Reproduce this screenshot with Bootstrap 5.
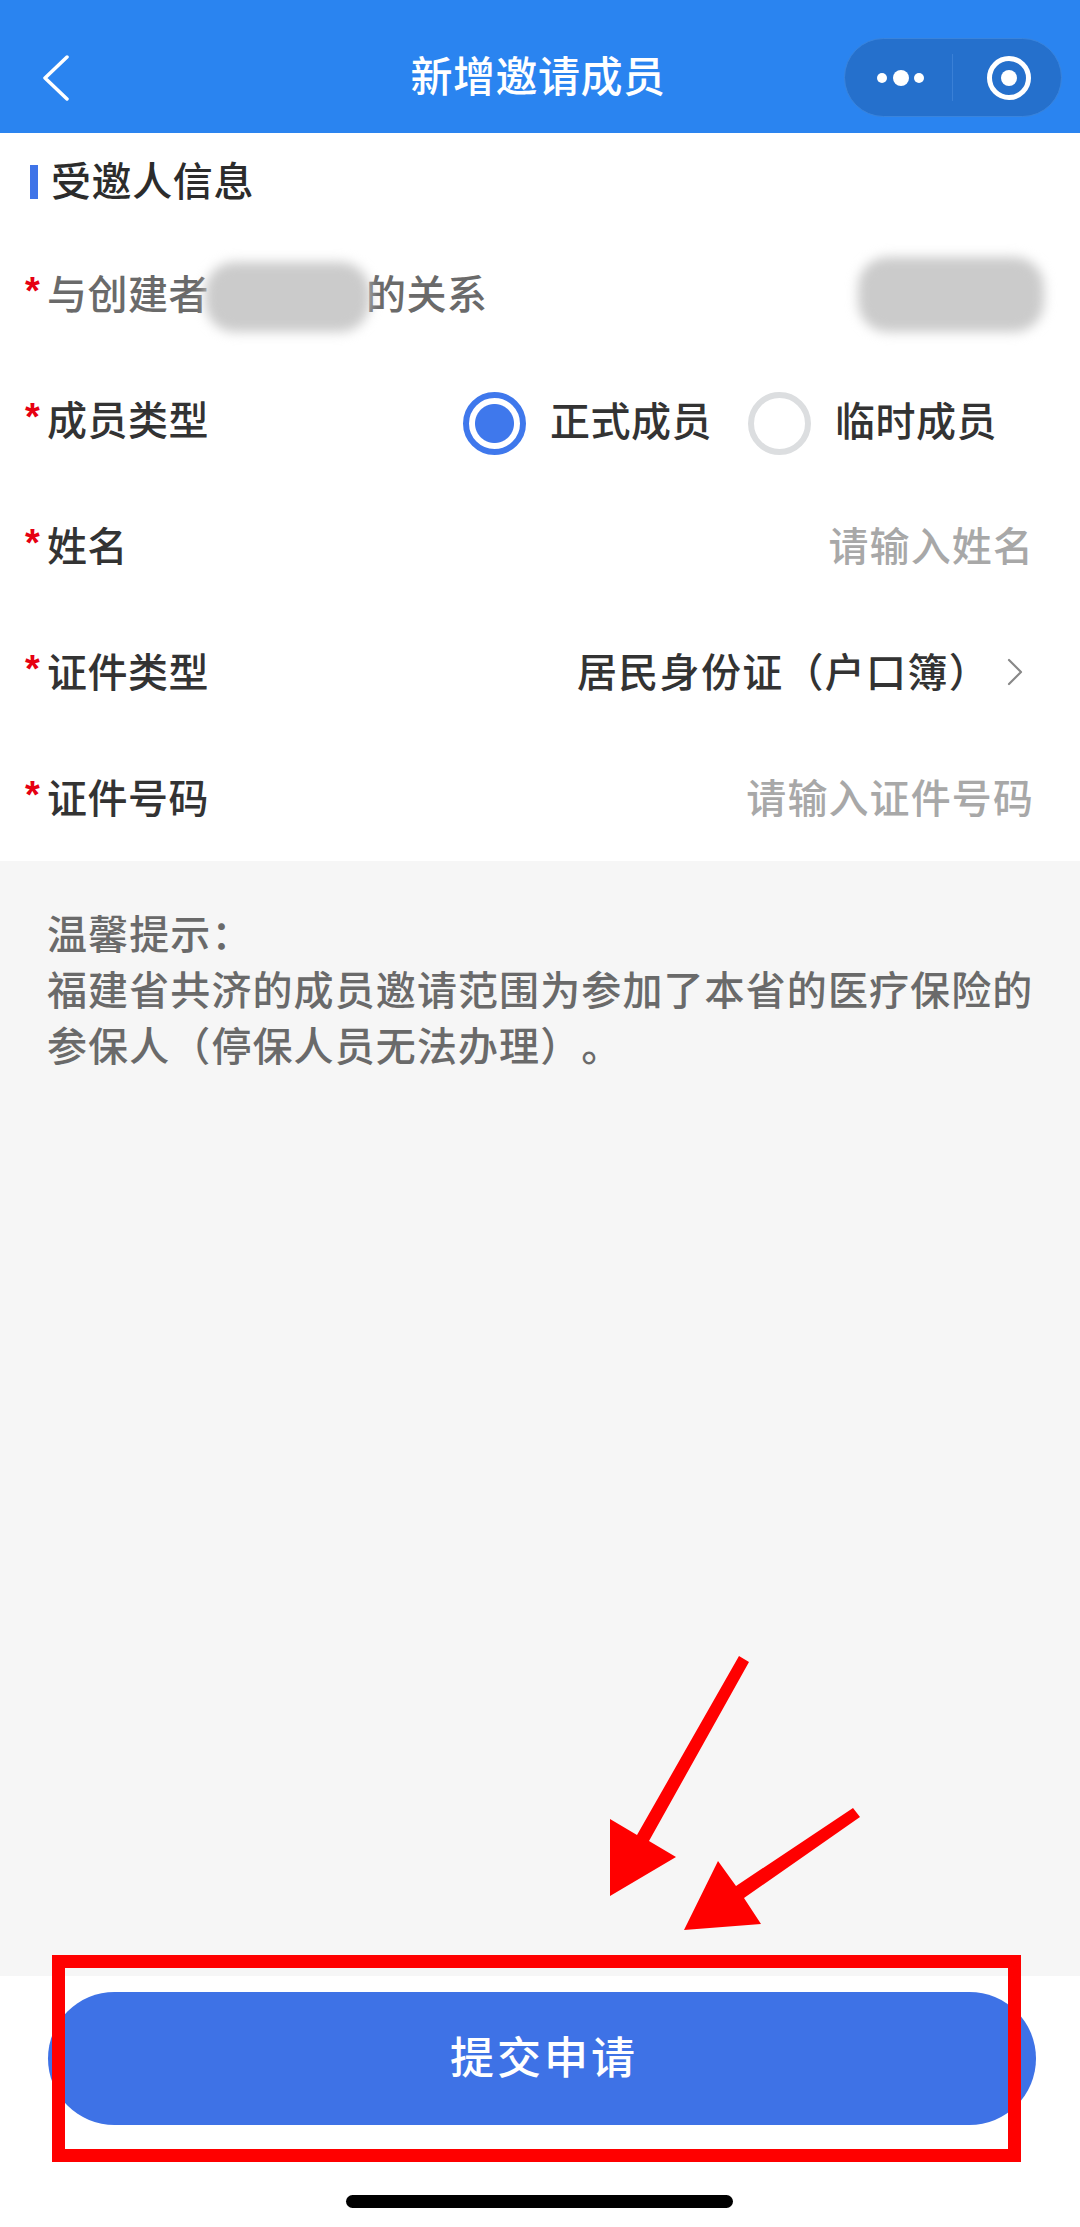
<!DOCTYPE html>
<html lang="zh-CN">
<head>
  <meta charset="UTF-8">
  <title>新增邀请成员</title>
  <link href="https://cdn.jsdelivr.net/npm/bootstrap@5.3.3/dist/css/bootstrap.min.css" rel="stylesheet">
  <style>
    body { font-family: "Liberation Sans", "Noto Sans CJK SC", sans-serif; background: #f6f6f6; text-spacing-trim: space-all; }
    .page-wrap { width: 1080px; min-height: 2227px; position: relative; overflow: hidden; }

    .top-bar { height: 133px; background: #2a84f0; padding: 38px 18px 16px 18px; display: grid; grid-template-columns: 1fr auto 1fr; align-items: center; }
    .back-arrow { margin-left: 25px; }
    .top-title { color: #fff; font-size: 42px; letter-spacing: .5px; font-weight: 500; line-height: 1; margin: 1px 0 0 -4px; }
    .capsule { width: 218px; height: 79px; border-radius: 40px; background: #2570cc; border: 1px solid #3a84dc; }
    .capsule-line { width: 1px; height: 47px; background: #3a80d6; }
    .capsule-left { width: 107px; }
    .capsule-right { width: 108px; }
    .dots-icon { margin-left: 9px; }
    .target-icon { margin-left: 3px; }

    .section-head { height: 98px; padding-left: 30px; }
    .section-bar { width: 8px; height: 34px; background: #3f74e8; margin-right: 13px; }
    .section-text { font-size: 40px; letter-spacing: .6px; font-weight: 500; color: #2c2c2c; line-height: 1; }

    .form-line { height: 126px; padding: 0 46px 0 25px; font-size: 40px; line-height: 1; letter-spacing: .5px; }
    .req { color: #e60012; font-family: "Liberation Sans", sans-serif; font-weight: 700; font-size: 38px; width: 22px; height: 40px; margin-top: -4px; }
    .line-label { color: #333; font-weight: 500; margin-top: 1px; }
    .line-label.muted-label { color: #6a6a6a; }
    .value-text { color: #333; font-weight: 500; letter-spacing: 1.3px; margin-top: 1px; }
    .chevron-mark { margin: 0 10px 0 16px; }
    .blur-blob { background: #cbcbcb; filter: blur(6px); border-radius: 30px; }
    .blob-a { width: 165px; height: 70px; margin: 3px -4px -3px; }
    .blob-b { width: 186px; height: 75px; margin-right: -10px; }

    .form-control.plain-input { border: 0; padding: 0; box-shadow: none; background: transparent; text-align: right; font-size: 40px; letter-spacing: 1.1px; font-weight: 500; line-height: 1.2; width: 500px; margin-top: 1px; }
    .plain-input::placeholder { color: #a8a8a8; opacity: 1; }

    .radio-box { margin-right: 37px; gap: 36px; margin-top: 6px; }
    .form-check-input.round-radio { width: 63px; height: 63px; margin: 0 24px 0 0; border: 6px solid #dcdee0; --bs-form-check-bg-image: none; box-shadow: none; float: none; flex: none; }
    .form-check-input.round-radio:checked { border-color: #3f78ec; background: radial-gradient(circle, #3f78ec 19px, #fff 20px); }
    .radio-text { font-size: 40px; color: #333; font-weight: 500; margin-top: -2px; }

    .tip-block { padding: 46px 20px 0 47px; font-size: 40px; font-weight: 500; letter-spacing: 1.1px; line-height: 56px; color: #6a6a6a; }

    .bottom-bar { height: 251px; padding-top: 16px; }
    .btn.submit-btn { display: block; width: 988px; height: 133px; margin-left: 48px; padding-left: 16px; border: 0; background: #3e72e6; color: #fff; font-size: 44px; font-weight: 500; letter-spacing: 3px; }
    .home-bar { width: 387px; height: 13px; border-radius: 7px; background: #000; margin: 70px auto 0; transform: translateX(-1px); }

    .mark-layer { position: absolute; left: 0; top: 0; pointer-events: none; }
  </style>
</head>
<body>
  <div class="page-wrap d-flex flex-column">

    <!-- 顶部导航 -->
    <div class="top-bar">
      <div>
        <svg width="26" height="46" viewBox="0 0 26 46" fill="none" stroke="#fff" stroke-width="3.5" stroke-linecap="round" stroke-linejoin="round" class="back-arrow d-block"><path d="M24 2 2 23l22 21"/></svg>
      </div>
      <div class="top-title">新增邀请成员</div>
      <div class="d-flex justify-content-end">
        <div class="capsule d-flex align-items-center">
          <div class="capsule-left d-flex justify-content-center">
            <svg width="52" height="20" viewBox="0 0 52 20" fill="#fff" class="dots-icon d-block"><circle cx="5" cy="10" r="5"/><circle cx="24" cy="10" r="8"/><circle cx="42" cy="10" r="5"/></svg>
          </div>
          <div class="capsule-line"></div>
          <div class="capsule-right d-flex justify-content-center">
            <svg width="46" height="46" viewBox="0 0 46 46" class="target-icon d-block"><circle cx="23" cy="23" r="19.5" fill="none" stroke="#fff" stroke-width="5"/><circle cx="23" cy="23" r="8" fill="#fff"/></svg>
          </div>
        </div>
      </div>
    </div>

    <!-- 表单 -->
    <form class="bg-white">
      <div class="section-head d-flex align-items-center">
        <div class="section-bar"></div>
        <div class="section-text">受邀人信息</div>
      </div>

      <div class="form-line d-flex align-items-center justify-content-between">
        <div class="d-flex align-items-center">
          <span class="req">*</span>
          <span class="line-label muted-label">与创建者</span>
          <span class="blur-blob blob-a"></span>
          <span class="line-label muted-label">的关系</span>
        </div>
        <span class="blur-blob blob-b"></span>
      </div>

      <div class="form-line d-flex align-items-center justify-content-between">
        <div class="d-flex align-items-center">
          <span class="req">*</span>
          <span class="line-label">成员类型</span>
        </div>
        <div class="radio-box d-flex align-items-center">
          <label class="d-flex align-items-center">
            <input class="form-check-input round-radio" type="radio" name="memberType" checked>
            <span class="radio-text">正式成员</span>
          </label>
          <label class="d-flex align-items-center">
            <input class="form-check-input round-radio" type="radio" name="memberType">
            <span class="radio-text">临时成员</span>
          </label>
        </div>
      </div>

      <div class="form-line d-flex align-items-center justify-content-between">
        <div class="d-flex align-items-center">
          <span class="req">*</span>
          <span class="line-label">姓名</span>
        </div>
        <input class="form-control plain-input" type="text" placeholder="请输入姓名">
      </div>

      <div class="form-line d-flex align-items-center justify-content-between">
        <div class="d-flex align-items-center">
          <span class="req">*</span>
          <span class="line-label">证件类型</span>
        </div>
        <div class="d-flex align-items-center">
          <span class="value-text">居民身份证（户口簿）</span>
          <svg width="18" height="28" viewBox="0 0 18 28" fill="none" stroke="#888" stroke-width="2.2" stroke-linecap="round" stroke-linejoin="round" class="chevron-mark"><path d="M3 2l12 12L3 26"/></svg>
        </div>
      </div>

      <div class="form-line d-flex align-items-center justify-content-between">
        <div class="d-flex align-items-center">
          <span class="req">*</span>
          <span class="line-label">证件号码</span>
        </div>
        <input class="form-control plain-input" type="text" placeholder="请输入证件号码">
      </div>
    </form>

    <!-- 提示 -->
    <div class="tip-block flex-grow-1">
      温馨提示：<br>
      福建省共济的成员邀请范围为参加了本省的医疗保险的参保人（停保人员无法办理）。
    </div>

    <!-- 底部按钮 -->
    <div class="bottom-bar bg-white">
      <button type="button" class="btn submit-btn rounded-pill">提交申请</button>
      <div class="home-bar"></div>
    </div>

    <!-- 红色标注 -->
    <svg class="mark-layer" width="1080" height="2227" viewBox="0 0 1080 2227">
      <rect x="58.5" y="1961.5" width="956" height="194" fill="none" stroke="#ff0000" stroke-width="13"/>
      <path fill="#ff0000" d="M739 1656 749 1662 649 1841 676 1857 610 1896 610 1819 637 1835Z"/>
      <path fill="#ff0000" d="M853 1808 860 1817 744 1898 761 1924 684 1930 718 1861 736 1886Z"/>
    </svg>
  </div>

  <script src="https://cdn.jsdelivr.net/npm/bootstrap@5.3.3/dist/js/bootstrap.bundle.min.js"></script>
</body>
</html>
